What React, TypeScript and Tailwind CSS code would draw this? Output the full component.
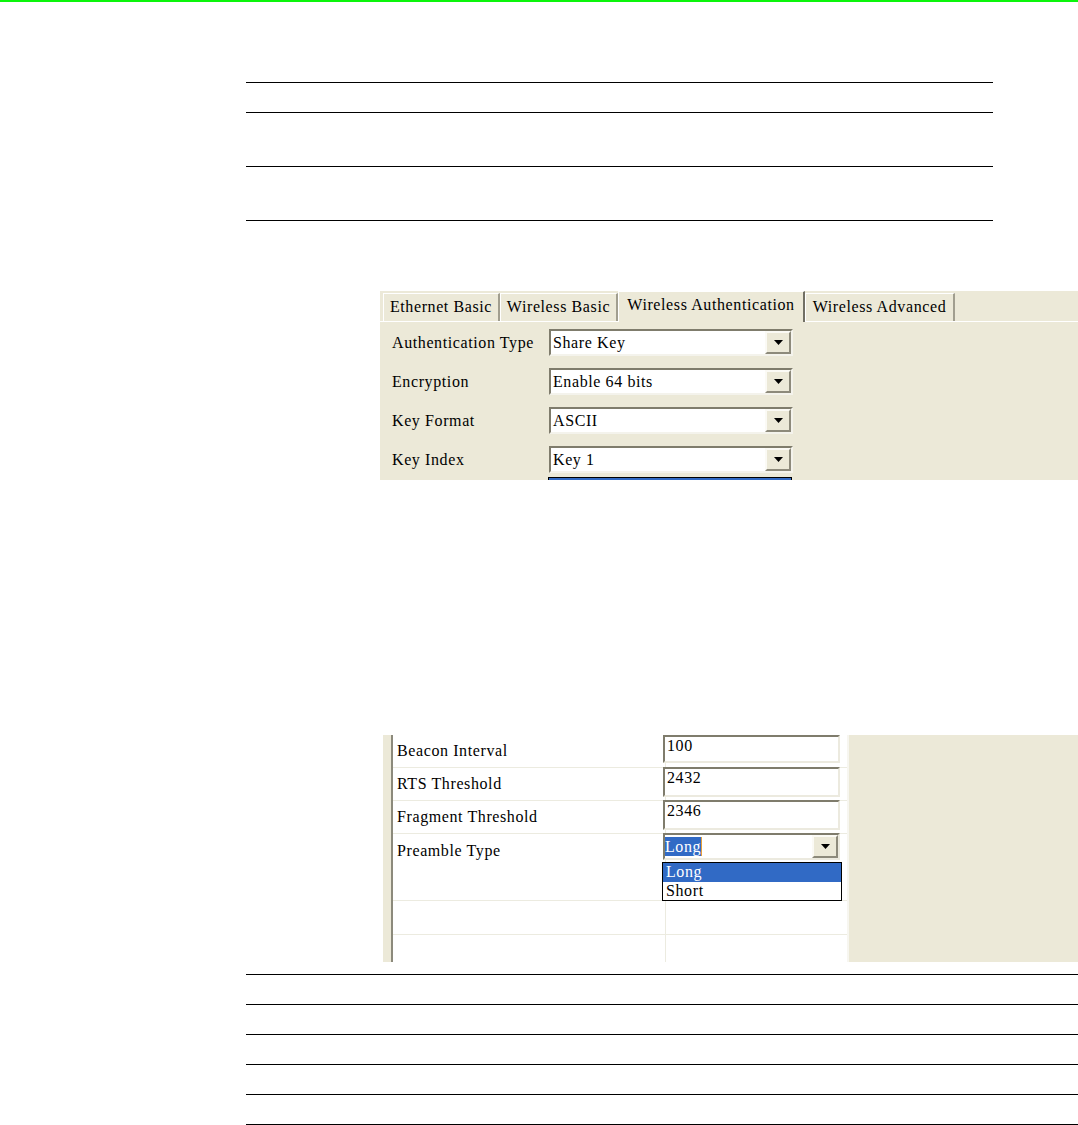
import clsx from "clsx";

function Arrow() {
  return (
    <svg width="9" height="5" viewBox="0 0 9 5">
      <path d="M0 0h9L4.5 5z" fill="#000" />
    </svg>
  );
}

function DropButton({ className }: { className?: string }) {
  return (
    <div
      className={clsx(
        "flex items-center justify-center bg-[#ece9d8] border-2 border-t-[#fbfaf5] border-l-[#fbfaf5] border-b-[#8d8a7b] border-r-[#8d8a7b]",
        className
      )}
    >
      <Arrow />
    </div>
  );
}

function Tab({ label, width, active }: { label: string; width: string; active?: boolean }) {
  return (
    <div
      className={clsx(
        "flex items-center justify-center bg-[#ece9d8] border-t border-l border-white border-r-2 whitespace-nowrap",
        width,
        active ? "h-[31px] -mb-px relative z-10 border-r-[#716f64] pb-[4px]" : "h-[28px] border-r-[#a19e8f] pb-px"
      )}
    >
      {label}
    </div>
  );
}

function AuthRow({ label, value }: { label: string; value: string }) {
  return (
    <div className="flex items-center h-[27px]">
      <div className="w-[169px] pl-[12px] whitespace-nowrap">{label}</div>
      <div className="w-[244px] h-[27px] flex bg-white border-2 border-t-[#7f7c6c] border-l-[#7f7c6c] border-b-[#f4f3ec] border-r-[#f4f3ec]">
        <div className="flex-1 flex items-center pl-[2px]">{value}</div>
        <DropButton className="w-[26px]" />
      </div>
    </div>
  );
}

function TextRow({ label, value, first }: { label: string; value: string; first?: boolean }) {
  return (
    <div className="flex h-[33px] border-b border-[#ecebe0]">
      <div className="w-[273px] border-r border-[#ecebe0] pl-[4px] flex items-center">{label}</div>
      <div className="flex-1">
        <div
          className={clsx(
            "w-[177px] -ml-[3px] bg-white pl-[2px] leading-[18px] border-2 border-t-[#7f7c6c] border-l-[#7f7c6c] border-r-[#eceadf] border-b-[#eceadf]",
            first ? "h-[28px]" : "h-[30px] -mt-px"
          )}
        >
          {value}
        </div>
      </div>
    </div>
  );
}

export default function App() {
  return (
    <div className="w-[1078px] h-[1125px] bg-white text-black text-[16px] tracking-[0.6px] [font-family:'Liberation_Serif',serif] overflow-hidden">
      <div className="h-[2px] bg-[#0cf50c]" />

      <div className="mt-[80px] ml-[246px] w-[747px]">
        <div className="h-[30px] border-t border-black" />
        <div className="h-[54px] border-t border-black" />
        <div className="h-[54px] border-t border-black" />
        <div className="h-px bg-black" />
      </div>

      {/* Wireless Authentication tab */}
      <div className="mt-[70px] ml-[380px] w-[698px] h-[189px] bg-[#ece9d8] flex flex-col">
        <div className="h-[31px] flex items-end pl-[3px] border-b border-white">
          <Tab label="Ethernet Basic" width="w-[117px]" />
          <Tab label="Wireless Basic" width="w-[118px]" />
          <Tab label="Wireless Authentication" width="w-[187px]" active />
          <Tab label="Wireless Advanced" width="w-[150px]" />
        </div>
        <div className="pt-[7px] flex flex-col gap-[12px]">
          <AuthRow label="Authentication Type" value="Share Key" />
          <AuthRow label="Encryption" value="Enable 64 bits" />
          <AuthRow label="Key Format" value="ASCII" />
          <AuthRow label="Key Index" value="Key 1" />
        </div>
        <div className="mt-[4px] ml-[168px] w-[244px] h-[3px] bg-[#316ac5] border-t border-l border-r border-black" />
      </div>

      {/* Wireless Advanced table */}
      <div className="mt-[255px] ml-[383px] w-[695px] h-[227px] flex overflow-hidden">
        <div className="w-[8px] bg-[#ece9d8]" />
        <div className="w-[2px] bg-[#8c8a7c]" />
        <div className="w-[454px] bg-white flex flex-col">
          <TextRow label="Beacon Interval" value="100" first />
          <TextRow label="RTS Threshold" value="2432" />
          <TextRow label="Fragment Threshold" value="2346" />
          <div className="flex h-[67px] border-b border-[#ecebe0]">
            <div className="w-[273px] border-r border-[#ecebe0] pl-[4px] h-full">
              <div className="h-[33px] flex items-center">Preamble Type</div>
            </div>
            <div className="flex-1 relative z-10">
              <div className="w-[177px] h-[27px] -mt-px -ml-[3px] flex bg-white border-2 border-t-[#7f7c6c] border-l-[#7f7c6c] border-r-[#eceadf] border-b-[#eceadf]">
                <div className="flex-1 flex items-start pt-[2px]">
                  <span className="bg-[#316ac5] text-white leading-[19px]">Long</span>
                  <span className="w-px h-[19px] bg-[#e5a03a]" />
                </div>
                <DropButton className="w-[26px]" />
              </div>
              <div className="mt-[2px] -ml-[4px] w-[180px] h-[39px] border border-black bg-white flex flex-col leading-[18px]">
                <div className="h-[19px] bg-[#316ac5] text-white pl-[3px]">Long</div>
                <div className="h-[18px] pl-[3px]">Short</div>
              </div>
            </div>
          </div>
          <div className="flex h-[34px] border-b border-[#ecebe0]">
            <div className="w-[273px] border-r border-[#ecebe0]" />
          </div>
          <div className="flex h-[27px]">
            <div className="w-[273px] border-r border-[#ecebe0]" />
          </div>
        </div>
        <div className="flex-1 bg-[#ece9d8] border-l-2 border-[#f7f6f0]" />
      </div>

      <div className="mt-[12px] ml-[246px] w-[832px]">
        <div className="h-[30px] border-t border-black" />
        <div className="h-[30px] border-t border-black" />
        <div className="h-[30px] border-t border-black" />
        <div className="h-[30px] border-t border-black" />
        <div className="h-[30px] border-t border-black" />
        <div className="h-px bg-black" />
      </div>
    </div>
  );
}
